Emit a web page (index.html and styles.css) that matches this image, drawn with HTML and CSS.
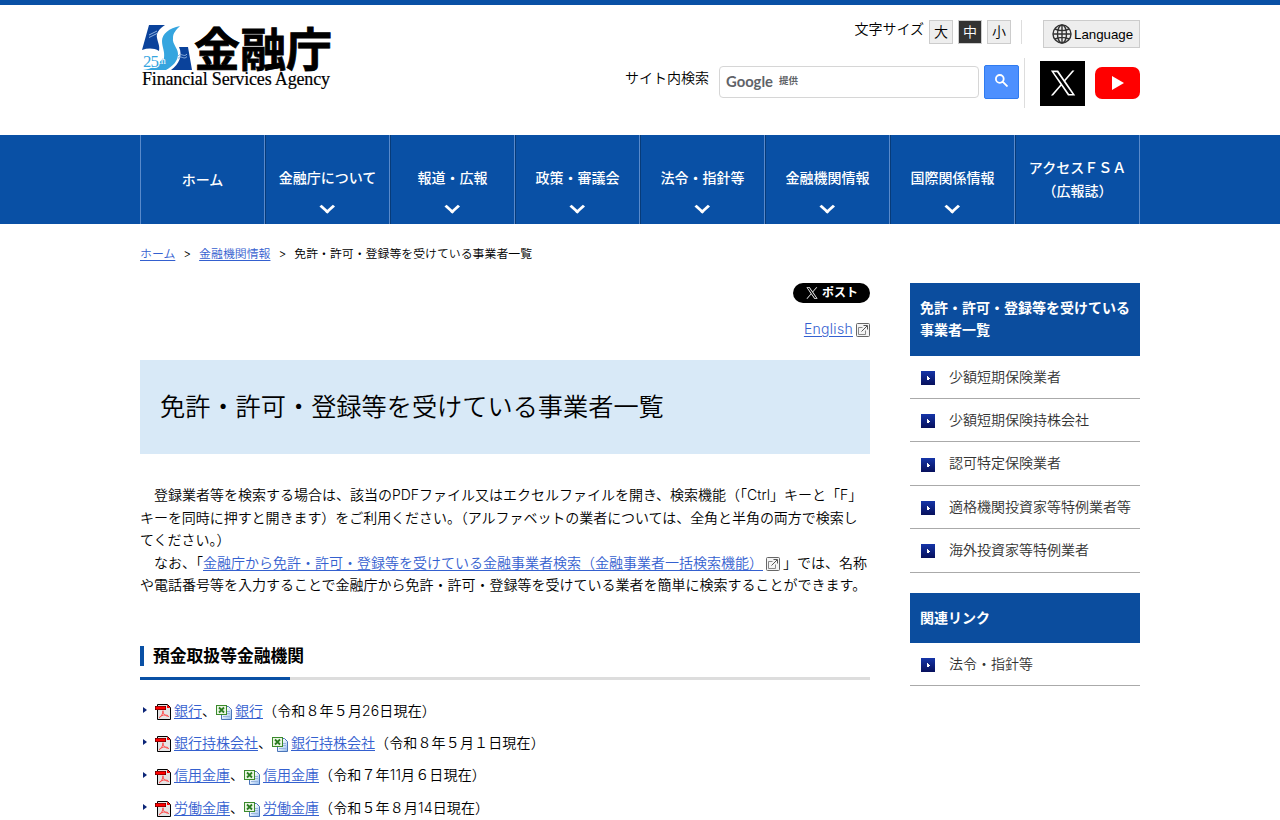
FILE: index.html
```html
<!DOCTYPE html>
<html lang="ja">
<head>
    <meta charset="UTF-8">
    <meta name="viewport" content="width=device-width, initial-scale=1.0">
    <title>免許・許可・登録等を受けている事業者一覧：金融庁</title>
    <link rel="stylesheet" href="styles.css">
</head>
<body>
    <!-- shared icons -->
    <svg class="defs" width="0" height="0">
        <defs>
            <linearGradient id="sheet" x1="0" y1="0" x2="1" y2="1">
                <stop offset="0.3" stop-color="#ffffff"/>
                <stop offset="1" stop-color="#8db8ee"/>
            </linearGradient>
            <symbol id="icon-x" viewBox="0 0 24 24">
                <path d="M14.2 10.2 22.6 0.5h-2l-7.3 8.4L7.5 0.5H0.8l8.8 12.8L0.8 23.5h2l7.7-8.9 6.1 8.9h6.7zM11.5 13.4l-0.9-1.3L3.5 2h3l5.7 8.2 0.9 1.3 7.5 10.6h-3z"/>
            </symbol>
            <symbol id="icon-ext" viewBox="0 0 14 14">
                <rect x="0.5" y="0.5" width="13" height="13" rx="1" fill="#f4f4f4" stroke="#666"/>
                <path d="M6.500 4.500h-4v7h7V7.500" fill="none" stroke="#888"/>
                <path d="M5.500 8.500l5.500-5.500M7.500 2.500h4v4" fill="none" stroke="#555"/>
            </symbol>
            <symbol id="icon-pdf" viewBox="0 0 16 16">
                <path d="M2.500 0.500h10l3 3v12h-13z" fill="#e4e4e4" stroke="#000"/>
                <path d="M12 0.500v3.500h3.500z" fill="#f00"/>
                <rect x="0" y="2" width="11" height="4" fill="#300"/>
                <rect x="0.500" y="2.500" width="10" height="3" fill="#f00"/>
                <path d="M4 14c2-1 4-4 4-7.500M8 7c0 3 2 5 6 5.500M4.500 13c2.500-2 5-2.500 8.500-1.500" fill="none" stroke="#ff5050"/>
            </symbol>
            <symbol id="icon-xls" viewBox="0 0 16 16">
                <path d="M5.500 2.500h7l3 3v10h-10z" fill="url(#sheet)" stroke="#4a74b8"/>
                <path d="M11 7.500h3M11 9.500h3M7 12.500h7" stroke="#9ab6de"/>
                <rect x="0.500" y="1.500" width="10" height="9" fill="#e9f5e2" stroke="#3b8a2c"/>
                <path d="M3 3.500l5 5M8 3.500l-5 5" stroke="#2b7d20" stroke-width="1.800"/>
            </symbol>
        </defs>
    </svg>

    <header class="header">
        <div class="inner header-inner">
            <a class="logo" href="#">
                <svg width="192" height="70" viewBox="0 0 192 70">
                    <path d="M9 3h16c-6 4-9 8-8 13 1 5 3 8 2 13-5-3-11-3-17-1z" fill="#0a429b"/>
                    <path d="M39 25h9l4 23H31c8-6 12-14 8-23z" fill="#0a429b"/>
                    <path d="M40 4C29 6 22 12 22 19c0 6 3 10 2 17-1 5-5 9-11 12h13c7-4 12-9 12-16 0-6-6-10-5-16 0-5 3-8 7-12z" fill="#35a5df"/>
                    <path d="M3 48c9-1 15-5 20-12v12z" fill="#35a5df"/>
                    <path d="M9 13l8-4M9 15.500l8-4M38 34c3-4 6 2 9-2M38 36.500c3-4 6 2 9-2" fill="none" stroke="#8fb2e0"/>
                    <text class="logo-years" x="3" y="45" textLength="16">25</text>
                    <text class="logo-th" x="18" y="42">th</text>
                    <text class="logo-ja" x="54" y="43.500" textLength="138">金融庁</text>
                    <text class="logo-en" x="2" y="62.500" textLength="188">Financial Services Agency</text>
                </svg>
            </a>
            <div class="tools">
                <div class="tools-row">
                    <span class="size-label">文字サイズ</span>
                    <ul class="sizes">
                        <li>大</li>
                        <li class="active">中</li>
                        <li>小</li>
                    </ul>
                    <button class="language">
                        <svg width="20" height="20" viewBox="0 0 20 20" fill="none" stroke="#333" stroke-width="1.400">
                            <circle cx="10" cy="10" r="9"/>
                            <ellipse cx="10" cy="10" rx="4.500" ry="9"/>
                            <path d="M10 1v18M1 10h18M3 5c4 2 10 2 14 0M3 15c4-2 10-2 14 0"/>
                        </svg>Language
                    </button>
                </div>
                <div class="search-row">
                    <span class="search-label">サイト内検索</span>
                    <div class="search-box"><span class="google">Google</span><span class="provided">提供</span></div>
                    <button class="search-btn">
                        <svg width="13" height="13" viewBox="0 0 13 13"><path fill="none" stroke="#fff" stroke-width="1.800" d="M8.700 4.900a3.900 3.900 0 1 1-7.800 0 3.900 3.900 0 0 1 7.800 0zM7.600 7.600l4.900 4.900"/></svg>
                    </button>
                    <div class="sns">
                        <a class="sns-x" href="#"><svg width="26" height="28" preserveAspectRatio="none"><use href="#icon-x"/></svg></a>
                        <a class="sns-yt" href="#"><svg width="12" height="14" viewBox="0 0 12 14"><path fill="#fff" d="M0 0v14l12-7z"/></svg></a>
                    </div>
                </div>
            </div>
        </div>
    </header>

    <nav class="gnav">
        <ul class="inner gnav-list">
            <li class="home">ホーム</li>
            <li class="sub">金融庁について</li>
            <li class="sub">報道・広報</li>
            <li class="sub">政策・審議会</li>
            <li class="sub">法令・指針等</li>
            <li class="sub">金融機関情報</li>
            <li class="sub">国際関係情報</li>
            <li>アクセスＦＳＡ<br>（広報誌）</li>
        </ul>
    </nav>

    <div class="inner">
        <div class="breadcrumb"><a href="#">ホーム</a><span>&gt;</span><a href="#">金融機関情報</a><span>&gt;</span>免許・許可・登録等を受けている事業者一覧</div>

        <div class="columns">
            <main class="main">
                <a class="post" href="#"><svg width="12" height="12"><use href="#icon-x"/></svg>ポスト</a>
                <p class="english"><a href="#">English</a><svg class="ext" width="14" height="14"><use href="#icon-ext"/></svg></p>

                <h1>免許・許可・登録等を受けている事業者一覧</h1>

                <p class="lead">　登録業者等を検索する場合は、該当のPDFファイル又はエクセルファイルを開き、検索機能（「Ctrl」キーと「F」<br><span class="tight">キーを同時に押すと開きます）をご利用ください。（アルファベットの業者については、全角と半角の両方で検索し</span><br>てください。）<br>　なお、「<a href="#">金融庁から免許・許可・登録等を受けている金融事業者検索（金融事業者一括検索機能）</a><svg class="ext ext-wide" width="14" height="14"><use href="#icon-ext"/></svg>」では、名称<br>や電話番号等を入力することで金融庁から免許・許可・登録等を受けている業者を簡単に検索することができます。</p>

                <h2><span>預金取扱等金融機関</span></h2>

                <ul class="files">
                    <li><svg class="file"><use href="#icon-pdf"/></svg><a href="#">銀行</a>、<svg class="file"><use href="#icon-xls"/></svg><a href="#">銀行</a><span class="date">（令和８年５月26日現在）</span></li>
                    <li><svg class="file"><use href="#icon-pdf"/></svg><a href="#">銀行持株会社</a>、<svg class="file"><use href="#icon-xls"/></svg><a href="#">銀行持株会社</a><span class="date">（令和８年５月１日現在）</span></li>
                    <li><svg class="file"><use href="#icon-pdf"/></svg><a href="#">信用金庫</a>、<svg class="file"><use href="#icon-xls"/></svg><a href="#">信用金庫</a><span class="date">（令和７年11月６日現在）</span></li>
                    <li><svg class="file"><use href="#icon-pdf"/></svg><a href="#">労働金庫</a>、<svg class="file"><use href="#icon-xls"/></svg><a href="#">労働金庫</a><span class="date">（令和５年８月14日現在）</span></li>
                </ul>
            </main>

            <aside class="side">
                <h3>免許・許可・登録等を受けている事業者一覧</h3>
                <ul class="side-list">
                    <li>少額短期保険業者</li>
                    <li>少額短期保険持株会社</li>
                    <li>認可特定保険業者</li>
                    <li>適格機関投資家等特例業者等</li>
                    <li>海外投資家等特例業者</li>
                </ul>
                <h3>関連リンク</h3>
                <ul class="side-list">
                    <li>法令・指針等</li>
                </ul>
            </aside>
        </div>
    </div>
</body>
</html>
```

FILE: styles.css
```css
* {
    box-sizing: border-box;
}

html {
    overflow: hidden;
}

body {
    margin: 0;
    height: 820px;
    overflow: hidden;
    font-family: Inter, "Noto Sans CJK JP", sans-serif;
    font-size: 14px;
    font-weight: 350;
    line-height: 22.4px;
    color: #000;
    background: #fff;
}

ul, p, h1, h2, h3 {
    margin: 0;
    padding: 0;
    list-style: none;
}

a {
    color: #3460cf;
    text-underline-offset: 2px;
}

svg {
    display: block;
}

.defs {
    position: absolute;
}

.inner {
    width: 1000px;
    margin: 0 auto;
}

/* header */
.header {
    height: 135px;
    border-top: 5px solid #0950a5;
}

.header-inner {
    display: flex;
    justify-content: space-between;
    padding-top: 15px;
}

.logo svg {
    overflow: visible;
    margin-top: 2px;
}

.logo-ja {
    font-family: "Noto Sans CJK JP", sans-serif;
    font-size: 46px;
    font-weight: 700;
    stroke: #000;
    stroke-width: 0.8px;
}

.logo-en {
    font-family: "Liberation Serif", serif;
    font-size: 18px;
    font-weight: 400;
    stroke: #000;
    stroke-width: 0.2px;
}

.logo-years {
    font-family: "Liberation Serif", serif;
    font-size: 17px;
    fill: #35a5df;
    stroke: #fff;
    stroke-width: 2px;
    paint-order: stroke;
}

.logo-th {
    font-family: "Liberation Serif", serif;
    font-size: 10px;
    fill: #fff;
}

.tools-row {
    display: flex;
    justify-content: flex-end;
    height: 38px;
}

.size-label {
    margin-top: -2px;
}

.sizes {
    display: flex;
    gap: 5px;
    height: 24px;
    margin: 0 21px 0 5px;
    padding-right: 10px;
    border-right: 1px solid #ddd;
}

.sizes li {
    width: 24px;
    height: 24px;
    border: 1px solid #ccc;
    background: #eee;
    text-align: center;
}

.sizes .active {
    background: #333;
    color: #fff;
}

.language {
    display: flex;
    align-items: center;
    width: 97px;
    height: 28px;
    padding: 0 0 0 8px;
    border: 1px solid #ccc;
    background: #eee;
    font-family: "Liberation Sans", sans-serif;
    font-size: 13.3px;
    gap: 2px;
}

.search-row {
    display: flex;
    align-items: center;
    height: 50px;
}

.search-label {
    margin: -9px 10px 0 0;
}

.search-box {
    display: flex;
    align-items: center;
    width: 260px;
    height: 32px;
    margin-top: -2px;
    padding: 0 6px 2px;
    border: 1px solid #d6d6d6;
    border-radius: 4px;
    color: #5f6368;
}

.google {
    font-family: Lato, sans-serif;
    font-size: 14.8px;
    font-weight: 700;
}

.provided {
    margin-left: 6px;
    font-size: 9.5px;
    font-weight: 700;
}

.search-btn {
    display: flex;
    align-items: center;
    justify-content: center;
    width: 35px;
    height: 34px;
    margin: -2px 5px 0;
    padding: 0 0 3px;
    border: 1px solid #2f7bf0;
    border-radius: 2px;
    background: #4d90fe;
}

.sns {
    display: flex;
    align-items: center;
    gap: 10px;
    height: 50px;
    padding-left: 15px;
    border-left: 1px solid #ddd;
}

.sns a {
    display: flex;
    align-items: center;
    justify-content: center;
    width: 45px;
}

.sns-x {
    height: 45px;
    background: #000;
    fill: #fff;
}

.sns-yt {
    height: 32px;
    border-radius: 7px;
    background: #f00;
}

/* global navigation */
.gnav {
    height: 89px;
    background: #0950a5;
    color: #fff;
}

.gnav-list {
    display: flex;
    height: 89px;
}

.gnav-list li {
    display: flex;
    flex-direction: column;
    align-items: center;
    justify-content: center;
    width: 125px;
    border-right: 1px solid #598acb;
    border-left: 1px solid #073b79;
    text-align: center;
    font-weight: 500;
}

.gnav-list .home {
    padding-top: 2px;
    border-left-color: #598acb;
}

.gnav-list .sub {
    justify-content: flex-start;
    padding-top: 32px;
}

.gnav-list .sub::after {
    content: "";
    box-sizing: border-box;
    width: 10.5px;
    height: 10.5px;
    margin-top: 11.5px;
    border: solid #fff;
    border-width: 0 2.5px 2.5px 0;
    border-width: 0 3px 3px 0;
    transform: scaleY(0.9) rotate(45deg);
}

/* breadcrumb */
.breadcrumb {
    height: 59px;
    padding-top: 19px;
    font-size: 11.9px;
}

.breadcrumb span {
    margin: 0 8px;
}

.columns {
    display: flex;
    justify-content: space-between;
    align-items: flex-start;
}

.main {
    width: 730px;
}

.post {
    display: flex;
    align-items: center;
    gap: 4px;
    width: 77px;
    height: 20px;
    margin-left: auto;
    padding-left: 13px;
    border-radius: 10px;
    background: #000;
    color: #fff;
    fill: #fff;
    font-size: 12px;
    font-weight: 700;
    text-decoration: none;
}

.english {
    margin-top: 15px;
    text-align: right;
}

.english a {
    letter-spacing: 0.3px;
}

.ext {
    display: inline-block;
    margin-left: 3px;
    vertical-align: -3px;
}

.ext-wide {
    margin-right: 3px;
}

h1 {
    height: 94px;
    margin-top: 20px;
    padding-left: 20px;
    background: #d8e9f7;
    font-size: 25.2px;
    font-weight: 350;
    line-height: 94px;
}

.lead {
    margin-top: 30px;
    white-space: nowrap;
}

.tight {
    letter-spacing: -0.05px;
}

h2 {
    height: 34px;
    margin-top: 50px;
    background:
        linear-gradient(#0950a5, #0950a5) 0 100% / 150px 3px no-repeat,
        linear-gradient(#ddd, #ddd) 0 100% / 100% 3px no-repeat;
    font-size: 16.8px;
    font-weight: 700;
    line-height: 20px;
}

h2 span {
    display: block;
    padding-left: 9px;
    border-left: 4px solid #0950a5;
}

.files {
    margin-top: 19.6px;
}

.files li {
    display: flex;
    align-items: center;
    margin-bottom: 9.8px;
}

.files li::before {
    content: "";
    margin: 0 8px 2px 3px;
    border: solid transparent;
    border-width: 3px 0 3px 4px;
    border-left-color: #0c2577;
}

.file {
    width: 16px;
    height: 16px;
    margin: 2px 3px 0 0;
}

.date {
    letter-spacing: 0.15px;
}

/* side menu */
.side {
    width: 230px;
    margin-top: -0.2px;
}

.side h3 {
    padding: 14px 10px;
    background: #0b4d9e;
    color: #fff;
    font-size: 14px;
    font-weight: 700;
}

.side-list {
    margin-bottom: 20px;
}

.side-list li {
    display: flex;
    align-items: center;
    gap: 14px;
    height: 43.4px;
    padding-left: 11px;
    border-bottom: 1px solid #aaa;
    color: #333;
}

.side-list li::before {
    content: "";
    width: 14px;
    height: 14px;
    margin-top: 2px;
    background:
        conic-gradient(from 225deg at 100% 50%, #fff 90deg, transparent 0) 6px 5px / 3px 4px no-repeat,
        linear-gradient(#1535a8, #07105c);
}
```
